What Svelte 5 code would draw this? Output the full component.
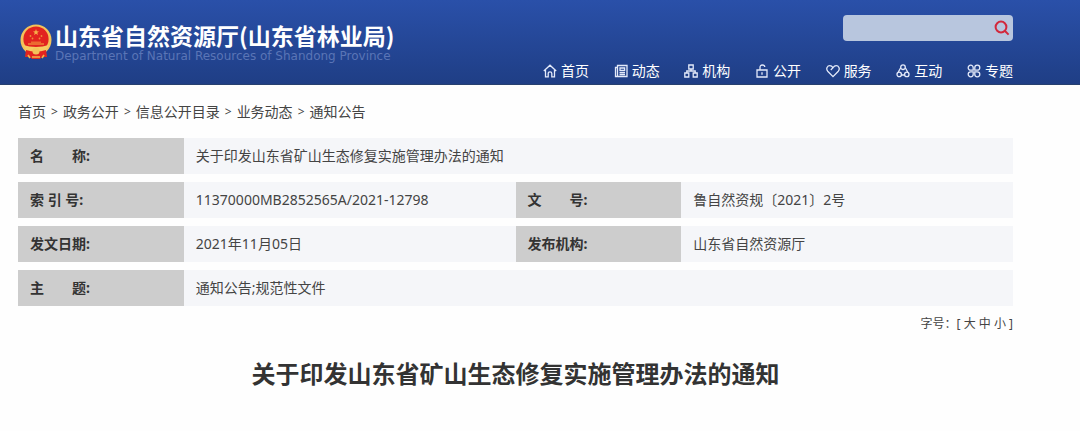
<script lang="ts">
    const nav = [
        { id: "home", label: "首页" },
        { id: "news", label: "动态" },
        { id: "org", label: "机构" },
        { id: "open", label: "公开" },
        { id: "service", label: "服务" },
        { id: "interact", label: "互动" },
        { id: "topic", label: "专题" },
    ];

    const crumbs = ["首页", "政务公开", "信息公开目录", "业务动态", "通知公告"];

    const title = "关于印发山东省矿山生态修复实施管理办法的通知";

    let keyword = $state("");
</script>

<header>
    <div class="wrap header-inner">
        <a class="brand" href="#home">
            <svg class="emblem" viewBox="0 0 32 36" aria-hidden="true">
                <path d="M6 25 L26 25 L27 33 L22 33 L20 35 L12 35 L10 33 L5 33 Z" fill="#dc2a22" />
                <circle cx="16" cy="16" r="15.5" fill="#f3c35a" />
                <circle cx="16" cy="15" r="12.6" fill="#e2231f" />
                <path d="M16 5 l.8 2.2 2.2.2 -1.7 1.4 .6 2.2 -1.9-1.2 -1.9 1.2 .6-2.2 -1.7-1.4 2.2-.2z" fill="#f6b04a" />
                <circle cx="10.5" cy="12" r=".9" fill="#f08a3c" />
                <circle cx="21.5" cy="12" r=".9" fill="#f08a3c" />
                <circle cx="12.5" cy="14.5" r=".9" fill="#f08a3c" />
                <circle cx="19.5" cy="14.5" r=".9" fill="#f08a3c" />
                <path d="M8 21 V19 H11 V17.5 H21 V19 H24 V21 Z" fill="#ec6a30" />
                <path d="M3 21 Q16 25 29 21 L26 26 Q16 29 6 26 Z" fill="#f6cb62" />
                <path d="M6 26 Q16 29 26 26 L26 32 H6 Z" fill="#e2231f" />
                <circle cx="16" cy="27" r="3.6" fill="#f3c35a" />
                <path d="M8 31 L10 34 M24 31 L22 34 M12 33 H20" fill="none" stroke="#f3b548" stroke-width="1.6" />
            </svg>
            <span class="brand-text">
                <span class="brand-cn">山东省自然资源厅(山东省林业局)</span>
                <span class="brand-en">Department of Natural Resources of Shandong Province</span>
            </span>
        </a>

        <div class="header-side">
            <form class="search" onsubmit={(e) => e.preventDefault()}>
                <input type="text" aria-label="搜索" bind:value={keyword} />
                <button type="submit" aria-label="搜索">
                    <svg viewBox="0 0 16 16">
                        <circle cx="7" cy="7" r="5.4" />
                        <path d="M11 11 L14.6 14.6" />
                    </svg>
                </button>
            </form>

            <nav>
                {#each nav as item}
                    <a href="#{item.id}">
                        <svg viewBox="0 0 14 14" aria-hidden="true">
                            {#if item.id === "home"}
                                <path d="M.8 7 L7 1.2 L13.2 7 M2.5 6 V12.8 H5.2 V9.5 Q5.2 7.8 7 7.8 Q8.8 7.8 8.8 9.5 V12.8 H11.5 V6" />
                            {:else if item.id === "news"}
                                <path d="M3.5 1.5 H13 V12.5 H1.5 V3.5 H3.5 Z M3.5 3.5 V12 M6 4 H10.6 V6.4 H6 Z M5.5 8.5 H11 M5.5 10.5 H11" />
                            {:else if item.id === "org"}
                                <path d="M4.8 1 H9.2 V5 H4.8 Z M.8 9 H4.8 V13 H.8 Z M9.2 9 H13.2 V13 H9.2 Z M7 5 V7 M2.8 9 V7 H11.2 V9" />
                            {:else if item.id === "open"}
                                <path d="M2 6 H12 V13 H2 Z M5 6 V3.5 Q5 1 7.4 1 Q9.6 1 9.8 3 M7 8.3 V10.8" />
                            {:else if item.id === "service"}
                                <path d="M7 12.6 L1.7 7.2 C-.4 4.6 1.4 1.7 3.8 1.7 C5.4 1.7 6.3 2.6 7 3.6 C7.7 2.6 8.6 1.7 10.2 1.7 C12.6 1.7 14.4 4.6 12.3 7.2 Z M7 3.6 L4.8 6" />
                            {:else if item.id === "interact"}
                                <path d="M4.7 3.8 L2.3 8 M9.3 3.8 L11.7 8 M5 11 H9" />
                                <circle cx="7" cy="3.2" r="2.3" />
                                <circle cx="3.2" cy="10.4" r="2.2" />
                                <circle cx="10.8" cy="10.4" r="2.2" />
                            {:else}
                                <path d="M6.2 6.2 H3.7 A2.5 2.5 0 1 1 6.2 3.7 Z M7.8 6.2 V3.7 A2.5 2.5 0 1 1 10.3 6.2 Z M6.2 7.8 V10.3 A2.5 2.5 0 1 1 3.7 7.8 Z M7.8 7.8 H10.3 A2.5 2.5 0 1 1 7.8 10.3 Z" />
                            {/if}
                        </svg>
                        {item.label}
                    </a>
                {/each}
            </nav>
        </div>
    </div>
</header>

<main class="wrap">
    <div class="crumbs">
        {#each crumbs as crumb, i}
            {#if i > 0}<span>&gt;</span>{/if}
            <a href="#crumb-{i}">{crumb}</a>
        {/each}
    </div>

    <table>
        <colgroup>
            <col class="col-label" />
            <col />
            <col class="col-label" />
            <col />
        </colgroup>
        <tbody>
            <tr>
                <th scope="row">名　　称:</th>
                <td colspan="3">{title}</td>
            </tr>
            <tr>
                <th scope="row">索 引 号:</th>
                <td>11370000MB2852565A/2021-12798</td>
                <th scope="row">文　　号:</th>
                <td>鲁自然资规〔2021〕2号</td>
            </tr>
            <tr>
                <th scope="row">发文日期:</th>
                <td>2021年11月05日</td>
                <th scope="row">发布机构:</th>
                <td>山东省自然资源厅</td>
            </tr>
            <tr>
                <th scope="row">主　　题:</th>
                <td colspan="3">通知公告;规范性文件</td>
            </tr>
        </tbody>
    </table>

    <div class="font-size">
        字号：[ <button>大</button> <button>中</button> <button>小</button> ]
    </div>

    <h1>{title}</h1>
</main>

<style>
    :global(body) {
        background: #fefefe;
        color: #444;
        font-family: "Noto Sans", "Noto Sans CJK SC", sans-serif;
        font-size: 14px;
        line-height: 20px;
    }

    a {
        color: inherit;
        text-decoration: none;
    }

    .wrap {
        margin: 0 67px 0 18px;
    }

    header {
        background: linear-gradient(#2a50a9, #1f3e85);
        border-bottom: 1px solid #27406f;
        color: #fff;
    }

    .header-inner {
        display: flex;
        justify-content: space-between;
        align-items: flex-start;
    }

    .brand {
        display: flex;
        align-items: flex-start;
        gap: 3px;
        padding: 24px 0 0 2px;
    }

    .emblem {
        width: 32px;
        height: 36px;
    }

    .brand-text {
        display: flex;
        flex-direction: column;
        white-space: nowrap;
    }

    .brand-cn {
        font-family: "Noto Sans CJK SC", sans-serif;
        font-size: 23px;
        font-weight: 700;
        line-height: 22px;
    }

    .brand-en {
        font-family: "DejaVu Sans", sans-serif;
        font-size: 12px;
        line-height: 20px;
        color: #5a75b6;
    }

    .header-side {
        display: flex;
        flex-direction: column;
        align-items: flex-end;
        gap: 20px;
        padding: 15px 0 3px;
    }

    .search {
        display: flex;
        width: 170px;
        height: 26px;
        border-radius: 4px;
        background: #b8c6de;
    }

    .search input {
        flex: 1;
        min-width: 0;
        padding: 0 8px;
        border: 0;
        outline: 0;
        background: none;
        font: inherit;
    }

    .search button {
        display: flex;
        align-items: center;
        padding: 0 3px;
        border: 0;
        background: none;
        cursor: pointer;
    }

    .search svg {
        width: 16px;
        height: 16px;
        fill: none;
        stroke: #d2283c;
        stroke-width: 2;
    }

    nav {
        display: flex;
        justify-content: space-between;
        width: 470px;
    }

    nav a {
        display: flex;
        align-items: center;
        gap: 4px;
    }

    nav svg {
        width: 14px;
        height: 14px;
        fill: none;
        stroke: #e4eafa;
        stroke-width: 1.3;
    }

    .crumbs {
        display: flex;
        gap: 5px;
        padding: 17px 0 8px;
    }

    .crumbs span {
        font-size: 12px;
    }

    table {
        width: 100%;
        table-layout: fixed;
        border-collapse: separate;
        border-spacing: 0 8px;
    }

    .col-label {
        width: calc(100% / 6);
    }

    th,
    td {
        height: 36px;
        padding: 0 12px;
        box-sizing: border-box;
        text-align: left;
    }

    th {
        background: #cdcdcd;
        color: #333;
        white-space: pre;
    }

    td {
        background: #f5f6f9;
    }

    .font-size {
        font-size: 12px;
        text-align: right;
    }

    .font-size button {
        padding: 0;
        border: 0;
        background: none;
        color: inherit;
        font: inherit;
        cursor: pointer;
    }

    h1 {
        margin: 22px 0 40px;
        color: #333;
        font-size: 24px;
        line-height: 36px;
        text-align: center;
    }
</style>
